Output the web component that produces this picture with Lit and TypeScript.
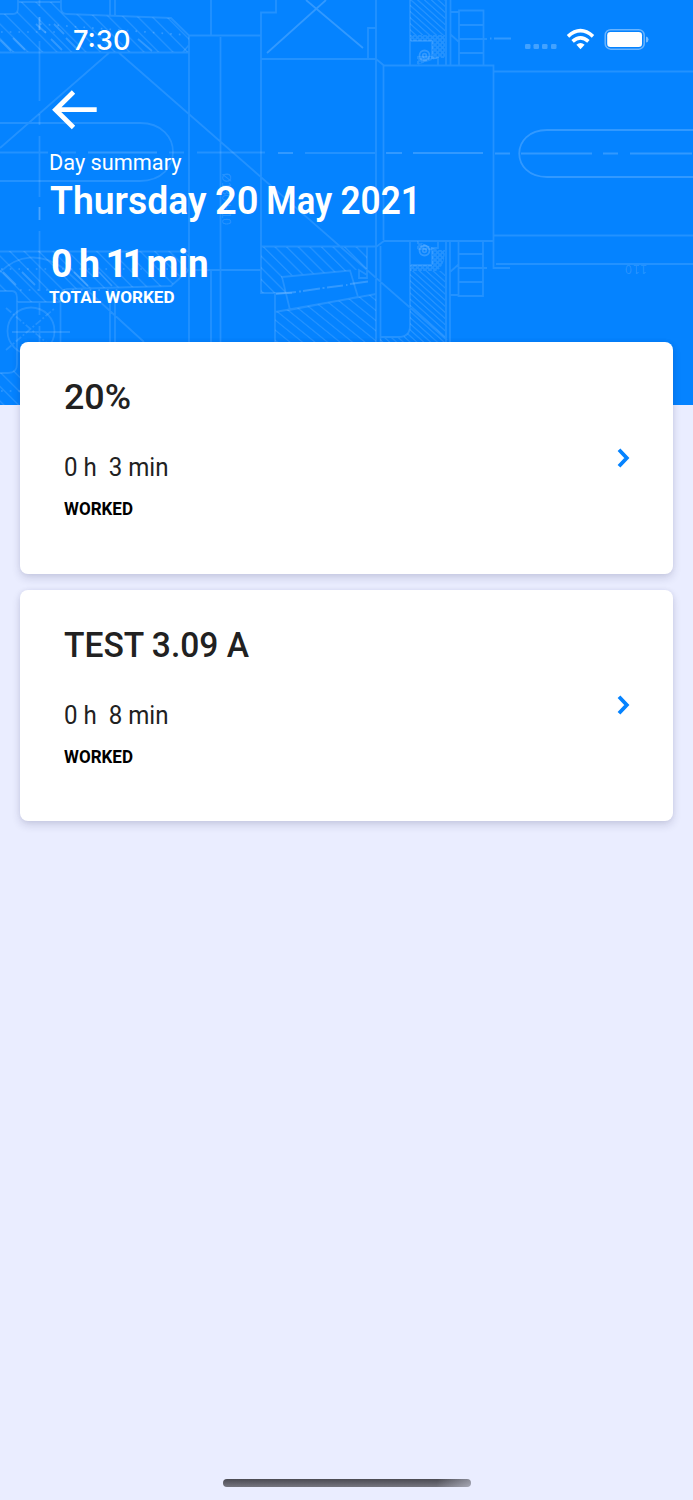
import { LitElement, html, svg, css, nothing } from "lit";
import { customElement, property } from "lit/decorators.js";

interface Job {
  title: string;
  titleWidth: number;
  time: string;
}

/** A word with its start offset and its width; a width of 0 sets it tight at its natural size. */
type Word = [string, number, number];

const jobs: Job[] = [
  { title: "20%", titleWidth: 67, time: "0 h  3 min" },
  { title: "TEST 3.09 A", titleWidth: 185, time: "0 h  8 min" },
];

const dateWords: Word[] = [["Thursday", 0, 156.5], ["20", 165, 43.5], ["May", 216.3, 66], ["2021", 290.5, 80.5]];
const totalWords: Word[] = [["0", 0, 21.5], ["h", 28, 21], ["11", 54.5, 0], ["min", 95.5, 62]];

/** One line of text fitted to a fixed advance width. */
@customElement("fit-line")
class FitLine extends LitElement {
  static styles = css`
    :host { display: block; }
    svg { display: block; overflow: visible; }
    text { fill: currentColor; white-space: pre; }
    .tight { letter-spacing: -5px; }
  `;
  @property() text = "";
  @property({ attribute: false }) words: Word[] = [];
  @property({ type: Number }) width = 100;
  @property({ type: Number }) height = 20;
  @property({ type: Number }) base = 16;
  render() {
    const y = this.base;
    return html`<svg width=${this.width} height=${this.height}>
      ${this.words.length
        ? svg`<text y=${y}>${this.words.map(([t, x, w]) => svg`<tspan class=${w ? "fit" : "tight"} x=${x} textLength=${w || nothing} lengthAdjust="spacingAndGlyphs">${t}</tspan>`)}</text>`
        : svg`<text x="0" y=${y} textLength=${this.width} lengthAdjust="spacingAndGlyphs">${this.text}</text>`}
    </svg>`;
  }
}

@customElement("blueprint-art")
class BlueprintArt extends LitElement {
  static styles = css`
    :host { display: block; }
    svg { display: block; }
    .line { fill: none; stroke: #fff; stroke-opacity: 0.12; stroke-width: 1.8; }
    .bright { fill: none; stroke: #fff; stroke-opacity: 0.18; stroke-width: 1.8; }
    .hatch { stroke: #fff; stroke-opacity: 0.12; stroke-width: 1.9; }
    .dots { fill: none; stroke: #fff; stroke-opacity: 0.18; stroke-width: 1.7; stroke-dasharray: 1.7 7; }
    .dim { fill: #fff; fill-opacity: 0.15; font: 12px "Liberation Sans", sans-serif; }
  `;
  render() {
    return html`<svg width="693" height="405" viewBox="0 0 693 405" aria-hidden="true">
      ${svg`
      <defs>
        <pattern id="wide" width="14.5" height="500" patternUnits="userSpaceOnUse" patternTransform="skewX(45)">
          <path class="hatch" d="M5 0V500" />
        </pattern>
        <pattern id="mid" width="11.6" height="500" patternUnits="userSpaceOnUse" patternTransform="skewX(45)">
          <path class="hatch" d="M5 0V500" />
        </pattern>
        <pattern id="low" width="12.5" height="500" patternUnits="userSpaceOnUse" patternTransform="skewX(51)">
          <path class="hatch" d="M5 0V500" />
        </pattern>
        <pattern id="fine" width="6.8" height="500" patternUnits="userSpaceOnUse" patternTransform="skewX(48)">
          <path class="hatch" d="M3 0V500" />
        </pattern>
        <pattern id="mesh" width="5" height="5" patternUnits="userSpaceOnUse">
          <path class="hatch" d="M0 0L5 5M5 0L0 5" />
        </pattern>
      </defs>
      <path fill="url(#wide)" d="M0 14H13Q18 14 18 8V2H61V8Q61 14 67 14L171 18L189 35V52H0Z" />
      <path fill="url(#wide)" d="M0 251H189V270L171 286L67 289Q61 290 61 296V302H17Q17 291 12 291H0ZM0 373Q17 373 17 365H20V405H0Z" />
      <path fill="url(#mid)" d="M261 247H367V269L282 276L286 293H261Z" />
      <path fill="url(#low)" d="M275 312L376 294V342H275Z" />
      <path fill="url(#fine)" d="M410 0H445V35H410ZM410 271H445V342H380V338H398Q410 337 410 326Z" />
      <path fill="url(#mesh)" d="M410 35H445V58H438L417 65V56H432V41H410ZM410 271H436Q445 267 445 250H438L417 241V250H432V265H410Z" />

      <path class="line" d="M0 14H13Q18 14 18 8V0M18 2H61M61 0V8Q61 14 67 14L171 18L189 35.5H261M0 52.5H189V35.5M183 52L189 45
        M110 0V16M115 0V16M211 0V35M189 52V342M220.5 37V342
        M110 52L0 148M118 52L447 340
        M0 123H140C184 123 184 181 140 181H0
        M276 0V12.5H261V293H292M261 59H376L384 65.5H493.500V268H510M368 59V28H376M376 0V342M383.500 65V240
        M410 0V65M446 0V65M450.500 0V65M450 12H459M450 34L459 42M459 65V10.500H483.500V65M459 25H483.500M459 39H487M459 53H483.500
        M493 71.500H693M493 235.500H693M496 264H693
        M376 247L384 241H493M380.500 246V342M410 241V326Q410 337 398 337H380M446 241V342M450 241V342
        M450 272L459 264M450 295H458.500M458.500 241V296H483V241M458.500 254H483M458.500 268H487M458.500 282H483
        M261 246.500H376M367 247V278H359V270L367 275M282 277L350 270.500L358 297L290 310ZM275 294V342M275 312L376 294
        M0 251.500H189M193 270H261M189 270L171 286L67 289Q60.500 290 60.500 296V342M17 302H61M0 291H12Q17 291 17 298V364Q17 373 8 373H0
        M110 303V342M115 303V342M211 270V342M0 272C18 255 40 252 63 268L144 342
        M410 41H432V58H438V65M432 265V248H438V241M410 265H432" />
      <path class="line" d="M39.500 0V6M39.500 17V30M39.500 41V101M39.500 114V125M39.500 136V197M39.500 207V220M39.500 231V291M39.500 303V315M39.500 326V342
        M0 152.500H48M61 152.500H76M169 152.500H184M197 152.500H265M305 153H375M12 332H70" />
      <circle class="line" cx="31" cy="331" r="23.500" />
      <path class="line" stroke-dasharray="7 2 2 2" d="M6 308L55 350M6 350L55 308" />
      <path class="bright" d="M306 0L363 48M326 0L267 53M88 152.500H157M278 153H293M386 153H402M413 153H483M495 153.500H510M521 153.500H592M603 153.500H618M630 153.500H692
        M490 38.500H491.500M494 38.500H511M39.500 17V30M39.500 207V220M303 291L320 288.500M327 287.500L343 285.500M350 284L368 281.500M276 294L296 292M322.500 288H324.500M346 285H347.500M299 291.500H301
        M693 130H547C510 130 510 177 547 177H693" />
      <path class="bright" d="M0 40L11 51M13 38L25 50M36 24L46 33M51 39L62 50M54 24L64 34M66 38L78 50M138 39L152 51M3 272L16 285M22 272L35 285M74 272L88 286M99 272L112 286" />
      <path class="dots" d="M1 32H60M40 24L186 35M1 269H180M20 290H120M1 391H20" />
      <circle class="bright" cx="424.500" cy="55.500" r="5" /><circle class="bright" cx="424.500" cy="55.500" r="1.800" />
      <circle class="bright" cx="424.500" cy="250.500" r="5" /><circle class="bright" cx="424.500" cy="250.500" r="1.800" />
      <text class="dim" transform="translate(222 173) rotate(90)" textLength="52">Ø130 H10</text>
      <text class="dim" transform="translate(647 265) rotate(180)" textLength="22">110</text>
      `}
    </svg>`;
  }
}

@customElement("job-card")
class JobCard extends LitElement {
  static styles = css`
    :host {
      display: flex;
      align-items: center;
      justify-content: space-between;
      box-sizing: border-box;
      height: 231.5px;
      padding: 0 43px 0 43.500px;
      border-radius: 8px;
      background: #fff;
      color: #212121;
      box-shadow: 0 4px 8px rgba(40, 40, 90, 0.16), 0 0 5px rgba(40, 40, 90, 0.06);
    }
    .info { height: 100%; }
    .title { padding-top: 40px; font: 500 35.500px Roboto, sans-serif; }
    .time { padding-top: 30px; font: 400 25.500px Roboto, sans-serif; }
    .label { padding-top: 20px; font: 700 17.500px Roboto, sans-serif; color: #000; }
    .chevron { display: block; }
  `;
  @property({ attribute: false }) job!: Job;
  render() {
    return html`
      <div class="info">
        <fit-line class="title" .text=${this.job.title} .width=${this.job.titleWidth} .height=${36} .base=${27.4}></fit-line>
        <fit-line class="time" .text=${this.job.time} .width=${104.5} .height=${28} .base=${27.5}></fit-line>
        <fit-line class="label" .text=${"WORKED"} .width=${69} .height=${20} .base=${19}></fit-line>
      </div>
      <svg class="chevron" width="13" height="20" viewBox="0 0 13 20">
        <path d="M2 1.800L9.800 10L2 18.200" fill="none" stroke="#0583ff" stroke-width="3.800" />
      </svg>
    `;
  }
}

@customElement("app-root")
class AppRoot extends LitElement {
  static styles = css`
    :host {
      display: flex;
      flex-direction: column;
      position: relative;
      width: 693px;
      height: 1500px;
      overflow: hidden;
      background: #eaedff;
    }
    .art { position: absolute; inset: 0 0 auto 0; height: 405px; background: #0583ff; }
    header { position: relative; height: 342px; flex: none; color: #fff; }
    .status { display: flex; height: 80px; padding: 0 44px 0 73px; justify-content: space-between; }
    .clock { font: 500 27.500px Inter, sans-serif; }
    .icons { display: block; }
    .back { display: block; margin: 9px 0 0 51px; }
    .kicker { margin: 18px 0 0 48.500px; font: 400 22.500px Roboto, sans-serif; }
    .date { margin: 0 0 0 49.500px; font: 600 38.500px Roboto, sans-serif; }
    .total { margin: 0 0 0 51px; font: 700 38.500px Roboto, sans-serif; }
    .caption { margin: 0 0 0 48.500px; font: 700 17.300px Roboto, sans-serif; }
    main { position: relative; display: flex; flex-direction: column; gap: 16px; padding: 0 20px; flex: 1; }
    .home {
      position: relative;
      align-self: center;
      width: 248px;
      height: 8px;
      margin-bottom: 13.500px;
      border-radius: 4px;
      background: linear-gradient(100deg, transparent 86%, rgba(234, 237, 255, 0.42) 100%), linear-gradient(#4b4b53, #75757f);
    }
  `;
  render() {
    return html`
      <blueprint-art class="art"></blueprint-art>
      <header>
        <div class="status">
          <fit-line class="clock" .text=${"7:30"} .width=${57.5} .height=${60} .base=${49.5}></fit-line>
          <svg class="icons" width="125" height="60" viewBox="524 0 125 60">
            <g fill="#fff" fill-opacity="0.25">
              <rect x="525" y="44" width="5.500" height="5" rx="1.300" /><rect x="533.500" y="44" width="5.500" height="5" rx="1.300" />
              <rect x="542" y="44" width="5.500" height="5" rx="1.300" /><rect x="551" y="44" width="5.500" height="5" rx="1.300" />
            </g>
            <g fill="none" stroke="#fff" stroke-width="3.600">
              <path d="M568 36.300Q580.500 25 593 36.300" />
              <path d="M572.600 41.300Q580.500 34.300 588.400 41.300" />
            </g>
            <path d="M576.400 44.700Q580.500 41.400 584.600 44.700L580.500 49.200Z" fill="#fff" />
            <rect x="605.200" y="29.700" width="39" height="19.500" rx="5.500" fill="none" stroke="#fff" stroke-opacity="0.4" stroke-width="1.500" />
            <rect x="607.200" y="32" width="34.800" height="15" rx="3.300" fill="#fff" />
            <path d="M646 36.500Q648.500 37 648.500 39.500T646 42.500Z" fill="#fff" fill-opacity="0.45" />
          </svg>
        </div>
        <svg class="back" width="47" height="42" viewBox="51 89 47 42">
          <path d="M96.700 109.700H55M73.500 92L55.500 109.700L73.500 127.500" fill="none" stroke="#fff" stroke-width="4.800" />
        </svg>
        <fit-line class="kicker" .text=${"Day summary"} .width=${132.5} .height=${31} .base=${20.7}></fit-line>
        <fit-line class="date" .words=${dateWords} .width=${370} .height=${60} .base=${34}></fit-line>
        <fit-line class="total" .words=${totalWords} .width=${158} .height=${45} .base=${36.7}></fit-line>
        <fit-line class="caption" .text=${"TOTAL WORKED"} .width=${125.5} .height=${20} .base=${17.5}></fit-line>
      </header>
      <main>${jobs.map((job) => html`<job-card .job=${job}></job-card>`)}</main>
      <div class="home"></div>
    `;
  }
}
